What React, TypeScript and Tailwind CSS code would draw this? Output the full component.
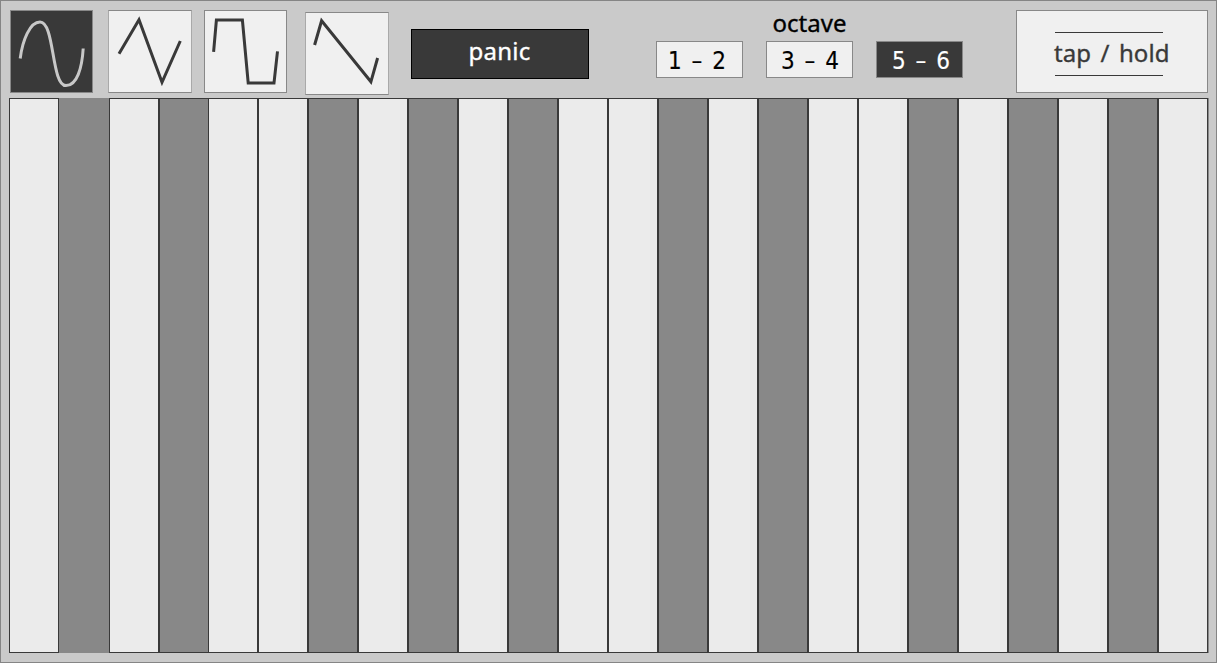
import React from "react";
import { clsx } from "clsx";

const keyPattern = "LDLDLLDLDLDLLDLDLLDLDLDL".split("");

const waves = [
  { name: "sine", d: "M20.2 58.5C22.5 40 30 22 40 22C55 22 51 85.6 66 85.6C77 85.6 82 68 83.2 48.5", box: "10 10 83 83", place: "ml-[9px] mt-[9px]" },
  { name: "triangle", d: "M119 53.7L139 19.8L162 82.3L180.3 41", box: "108 10 84 83", place: "ml-[15px] mt-[9px] w-[84px]" },
  { name: "square", d: "M213.6 51.8L216.4 20H242.4L248.2 83H274L277.5 51.4", box: "204 10 83 83", place: "ml-[12px] mt-[9px]" },
  { name: "saw", d: "M314.6 45L321.6 20.8L370.9 81.8L377.6 58", box: "305 12 84 83", place: "ml-[18px] mt-[11px] w-[84px]" },
];

function WaveButton({ wave, active }: { wave: (typeof waves)[number]; active: boolean }) {
  return (
    <button
      aria-label={wave.name}
      className={clsx(
        "h-[83px] shrink-0 border border-[#888]",
        wave.place,
        active ? "bg-[#393939] text-[#c8c8c8]" : "bg-[#f0f0f0] text-[#393939]",
        wave.name === "triangle" || wave.name === "saw" ? "border-x-[#a9a9a9]" : "w-[83px]",
      )}
    >
      <svg viewBox={wave.box} className="-m-px block h-[83px] w-[calc(100%+2px)]" fill="none" stroke="currentColor" strokeWidth="3">
        <path d={wave.d} />
      </svg>
    </button>
  );
}

function OctaveButton({ label, pad, active = false }: { label: string; pad: string; active?: boolean }) {
  return (
    <button
      className={clsx(
        "flex h-[37px] w-[87px] items-center border border-[#888] pt-[2px] font-['DejaVu_Sans_Condensed','DejaVu_Sans',sans-serif] text-[24px] leading-none whitespace-nowrap [font-stretch:condensed] [word-spacing:3px] [-webkit-text-stroke:0.15px_currentColor]",
        pad,
        active ? "bg-[#393939] text-white" : "bg-[#f0f0f0] text-black",
      )}
    >
      {label}
    </button>
  );
}

export default function App() {
  return (
    <main className="flex h-[663px] w-[1217px] flex-col overflow-hidden border border-[#858585] bg-[#cacaca] font-['Noto_Sans',sans-serif] text-[24px] [-webkit-text-stroke:0.35px_currentColor]">
      <header className="flex h-[97px] shrink-0 items-start">
        {waves.map((wave, i) => (
          <WaveButton key={wave.name} wave={wave} active={i === 0} />
        ))}
        <button className="ml-[22px] mt-[28px] flex h-[50px] w-[178px] shrink-0 items-center justify-center border border-black bg-[#393939] pr-[1px] pb-[7px] leading-none tracking-[0.2px] text-white">
          panic
        </button>
        <section className="ml-[67px] mt-[9px] flex w-[307px] shrink-0 flex-col">
          <h2 className="h-[31px] text-center leading-[25px] text-black">octave</h2>
          <div className="flex gap-[23px]">
            <OctaveButton label="1 – 2" pad="pl-[11px]" />
            <OctaveButton label="3 – 4" pad="pl-[14px]" />
            <OctaveButton label="5 – 6" pad="pl-[15px]" active />
          </div>
        </section>
        <button className="ml-[53px] mt-[9px] flex h-[83px] w-[192px] shrink-0 flex-col items-start border border-[#888] bg-[#f0f0f0] pl-[38px] pt-[21px] text-[#393939]">
          <span className="h-px w-[108px] bg-[#393939]" />
          <span className="-ml-px h-[42px] whitespace-nowrap leading-[40px] tracking-[0.1px] [word-spacing:3px]">tap / hold</span>
          <span className="h-px w-[108px] bg-[#393939]" />
        </button>
      </header>
      <div className="ml-[8px] flex h-[555px] w-[1200px] shrink-0 border-r border-[#888]">
        {keyPattern.map((tone, i) => (
          <button
            key={i}
            aria-label={`Key ${i + 1}`}
            className={clsx(
              "h-full shrink-0 border-[#393939]",
              tone === "L" ? "bg-[#ebebeb]" : "bg-[#888]",
              i === 1 ? "w-[50px]" : i === 3 ? "w-[49px] border-y border-l" : "w-[50px] border",
            )}
          />
        ))}
      </div>
    </main>
  );
}
